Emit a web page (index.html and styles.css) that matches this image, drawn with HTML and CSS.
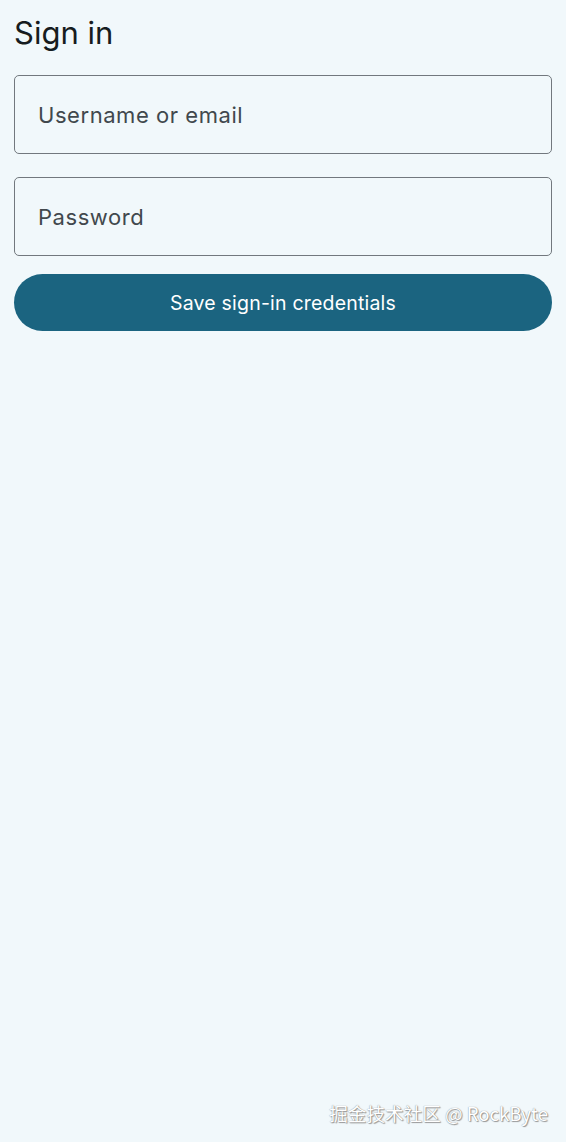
FILE: index.html
```html
<!DOCTYPE html>
<html>
<head>
<meta charset="utf-8">
<link rel="stylesheet" href="styles.css">
</head>
<body>
<main class="page">
  <h1 class="title">Sign in</h1>
  <div class="field"><span class="label">Username or email</span></div>
  <div class="field field-second"><span class="label">Password</span></div>
  <button class="save">Save sign-in credentials</button>
</main>
<div class="watermark">掘金技术社区 @ RockByte</div>
</body>
</html>
```
FILE: styles.css
```css
html, body {
  margin: 0;
  padding: 0;
  background: #f1f8fb;
  height: 100%;
}
body {
  font-family: Inter, "Noto Sans", sans-serif;
  position: relative;
  min-height: 1142px;
}
.page {
  display: flex;
  flex-direction: column;
  padding: 0 14px;
}
.title {
  margin: 13px 0 0 0;
  font-size: 31px;
  font-weight: 400;
  color: #161c20;
  line-height: 40px;
  height: 62px;
  letter-spacing: 0;
}
.field {
  box-sizing: border-box;
  height: 79px;
  border: 1.5px solid #72787e;
  border-radius: 5px;
  display: flex;
  align-items: center;
  padding-left: 23px;
}
.field-second {
  margin-top: 23px;
}
.label {
  font-size: 22px;
  color: #41484d;
  letter-spacing: 0.55px;
}
.save {
  margin-top: 18px;
  height: 57px;
  border: none;
  border-radius: 29px;
  background: #1b6480;
  color: #ffffff;
  font-family: Inter, "Noto Sans", sans-serif;
  font-size: 19.5px;
  letter-spacing: 0.2px;
}
.watermark {
  position: absolute;
  right: 18px;
  top: 1099px;
  font-family: "Noto Sans CJK SC", "Noto Sans", sans-serif;
  font-size: 18.6px;
  color: #ffffff;
  text-shadow: 0 0 1px #777, 1px 1px 1px #999;
}
```
